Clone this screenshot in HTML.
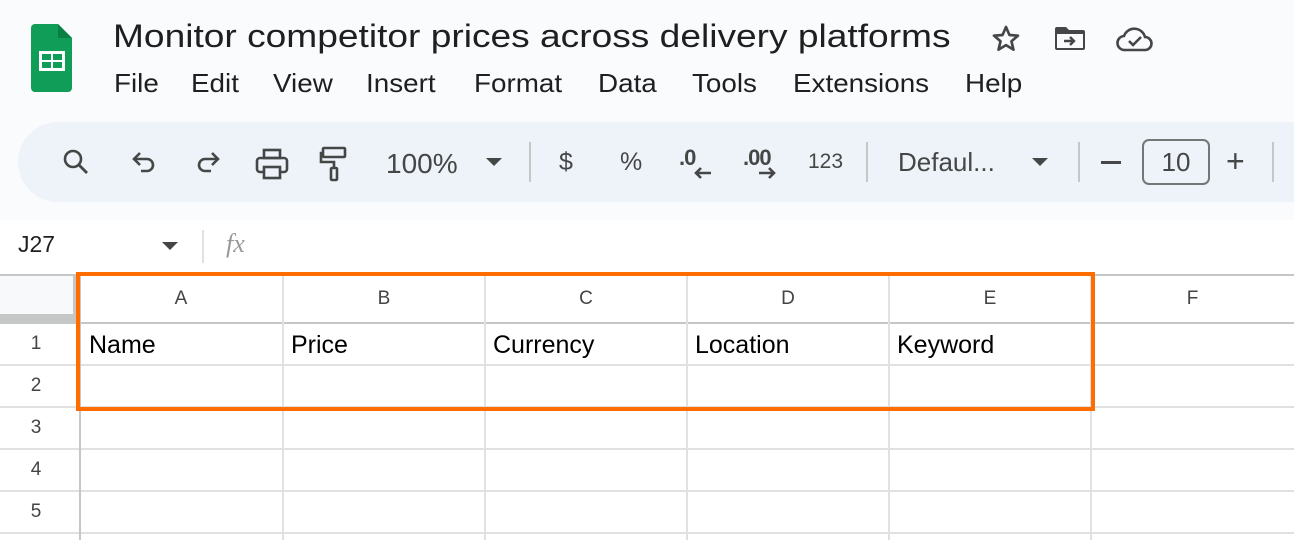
<!DOCTYPE html>
<html><head><meta charset="utf-8"><style>
*{margin:0;padding:0;box-sizing:border-box}
body{width:1294px;height:540px;overflow:hidden;background:#f9fbfd;font-family:"Liberation Sans",Arial,sans-serif;position:relative}
.a{position:absolute}
.title{left:113px;top:18px;font-size:32px;color:#1f1f1f;white-space:nowrap;transform:scaleX(1.16);transform-origin:left}
.menu{top:68px;font-size:26px;color:#1f1f1f;transform:scaleX(1.07);transform-origin:left}
.tb{left:18px;top:122px;width:1320px;height:80px;background:#eef2f9;border-radius:40px}
.ic{color:#444746;font-size:25px}
.sep{width:2px;height:40px;background:#c7c7c7;top:142px}
.fb{left:0;top:220px;width:1294px;height:54px;background:#fff}
.grid{left:0;top:274px;width:1294px;height:266px;background:#fff}
.hl{position:absolute;left:0;width:1294px;height:2px;background:#e1e1e1}
.vl{position:absolute;top:0;width:2px;height:266px;background:#e1e1e1}
.ch{position:absolute;top:14px;font-size:19px;color:#444;text-align:center}
.rh{position:absolute;left:0;width:72px;text-align:center;font-size:19px;color:#444}
.ct{position:absolute;top:57px;font-size:25px;color:#000}
</style></head><body>
<svg class="a" style="left:31px;top:24px" width="41" height="68" viewBox="0 0 41 68"><path d="M4 0H27L41 14V64a4 4 0 0 1-4 4H4a4 4 0 0 1-4-4V4a4 4 0 0 1 4-4z" fill="#0f9d58"/><path d="M27 0V14H41z" fill="#0b8043"/><rect x="8" y="27" width="26" height="20" fill="#fff"/><rect x="11" y="30" width="9" height="6" fill="#0f9d58"/><rect x="22" y="30" width="9" height="6" fill="#0f9d58"/><rect x="11" y="38" width="9" height="6" fill="#0f9d58"/><rect x="22" y="38" width="9" height="6" fill="#0f9d58"/></svg>
<div class="a title">Monitor competitor prices across delivery platforms</div>
<div class="a menu" style="left:114px">File</div>
<div class="a menu" style="left:191px">Edit</div>
<div class="a menu" style="left:273px">View</div>
<div class="a menu" style="left:366px">Insert</div>
<div class="a menu" style="left:474px">Format</div>
<div class="a menu" style="left:598px">Data</div>
<div class="a menu" style="left:692px">Tools</div>
<div class="a menu" style="left:793px">Extensions</div>
<div class="a menu" style="left:965px">Help</div>
<svg class="a" style="left:989px;top:23px" width="34" height="32" viewBox="0 0 24 24"><path d="M12 3l2.6 6 6.4.5-4.9 4.2 1.5 6.3L12 16.6 6.4 20l1.5-6.3L3 9.5 9.4 9z" fill="none" stroke="#444746" stroke-width="2" stroke-linejoin="round"/></svg>
<svg class="a" style="left:1054px;top:26px" width="32" height="26" viewBox="0 0 32 26"><path d="M1 3a2 2 0 0 1 2-2h9l3 3h14a2 2 0 0 1 2 2v16a2 2 0 0 1-2 2H3a2 2 0 0 1-2-2z" fill="#444746"/><rect x="3" y="8" width="26" height="14" fill="#f9fbfd"/><path d="M10 15h10M16 11l4 4-4 4" stroke="#444746" stroke-width="2.4" fill="none"/></svg>
<svg class="a" style="left:1116px;top:26px" width="38" height="26" viewBox="0 0 38 26"><path d="M9 24a7 7 0 0 1-1-14 11 11 0 0 1 21 1 6.5 6.5 0 0 1 0 13z" fill="none" stroke="#444746" stroke-width="2.6"/><path d="M13 15l4 4 8-8" stroke="#444746" stroke-width="2.6" fill="none"/></svg>
<div class="a tb"></div>
<svg class="a" style="left:62px;top:148px" width="28" height="28" viewBox="0 0 28 28"><circle cx="11" cy="11" r="8" fill="none" stroke="#444746" stroke-width="2.6"/><path d="M17 17l8 8" stroke="#444746" stroke-width="2.8"/></svg>
<svg class="a" style="left:132px;top:150px" width="26" height="28" viewBox="0 0 26 28"><path d="M3 9h12a6 6 0 0 1 0 12H9" fill="none" stroke="#444746" stroke-width="2.6"/><path d="M8 3L2 9l6 6" fill="none" stroke="#444746" stroke-width="2.6"/></svg>
<svg class="a" style="left:194px;top:150px" width="26" height="28" viewBox="0 0 26 28"><path d="M23 9H11a6 6 0 0 0 0 12h6" fill="none" stroke="#444746" stroke-width="2.6"/><path d="M18 3l6 6-6 6" fill="none" stroke="#444746" stroke-width="2.6"/></svg>
<svg class="a" style="left:255px;top:148px" width="34" height="32" viewBox="0 0 34 32"><rect x="9" y="2" width="16" height="8" fill="none" stroke="#444746" stroke-width="2.6"/><rect x="2" y="10" width="30" height="14" rx="3" fill="none" stroke="#444746" stroke-width="2.6"/><rect x="9" y="19" width="16" height="11" fill="#eef2f9" stroke="#444746" stroke-width="2.6"/></svg>
<svg class="a" style="left:319px;top:146px" width="30" height="36" viewBox="0 0 30 36"><rect x="4" y="2" width="22" height="9" rx="1" fill="none" stroke="#444746" stroke-width="2.6"/><path d="M4 7H2v9h13v6" fill="none" stroke="#444746" stroke-width="2.6"/><rect x="12" y="22" width="6" height="12" rx="1" fill="none" stroke="#444746" stroke-width="2.6"/></svg>
<div class="a ic" style="left:386px;top:148px;font-size:28px">100%</div>
<div class="a" style="left:486px;top:158px;width:0;height:0;border-left:8px solid transparent;border-right:8px solid transparent;border-top:8px solid #444746"></div>
<div class="a sep" style="left:529px"></div>
<div class="a ic" style="left:559px;top:148px">$</div>
<div class="a ic" style="left:620px;top:148px">%</div>
<div class="a ic" style="left:679px;top:145px;font-size:22px;font-weight:bold;letter-spacing:-1px">.0</div>
<svg class="a" style="left:693px;top:166px" width="20" height="14" viewBox="0 0 20 14"><path d="M18 7H3M8 2L3 7l5 5" stroke="#444746" stroke-width="2.6" fill="none"/></svg>
<div class="a ic" style="left:743px;top:145px;font-size:22px;font-weight:bold;letter-spacing:-1px">.00</div>
<svg class="a" style="left:757px;top:166px" width="20" height="14" viewBox="0 0 20 14"><path d="M2 7h15M12 2l5 5-5 5" stroke="#444746" stroke-width="2.6" fill="none"/></svg>
<div class="a ic" style="left:808px;top:150px;font-size:21px">123</div>
<div class="a sep" style="left:866px"></div>
<div class="a ic" style="left:898px;top:147px;font-size:26px">Defaul...</div>
<div class="a" style="left:1032px;top:158px;width:0;height:0;border-left:8px solid transparent;border-right:8px solid transparent;border-top:8px solid #444746"></div>
<div class="a sep" style="left:1078px"></div>
<div class="a" style="left:1101px;top:161px;width:20px;height:2.6px;background:#444746"></div>
<div class="a" style="left:1142px;top:139px;width:68px;height:46px;border:2px solid #747775;border-radius:7px;text-align:center;font-size:26px;line-height:42px;color:#444746">10</div>
<div class="a ic" style="left:1226px;top:143px;font-size:32px">+</div>
<div class="a sep" style="left:1272px"></div>
<div class="a fb"></div>
<div class="a" style="left:18px;top:231px;font-size:23px;color:#1f1f1f">J27</div>
<div class="a" style="left:162px;top:242px;width:0;height:0;border-left:8px solid transparent;border-right:8px solid transparent;border-top:8px solid #444746"></div>
<div class="a" style="left:202px;top:230px;width:2px;height:33px;background:#e1e1e1"></div>
<div class="a" style="left:226px;top:229px;font-size:26px;font-style:italic;color:#999;font-family:'Liberation Serif',serif">fx</div>
<div class="a grid">
 <div class="a" style="left:0;top:0;width:1294px;height:2px;background:#c4c7c5"></div>
 <div class="a" style="left:0;top:2px;width:74px;height:38px;background:#f8f9fa"></div>
 <div class="a" style="left:0;top:40px;width:80px;height:8px;background:#c4c7c5"></div>
 <div class="a" style="left:73px;top:0;width:7px;height:48px;background:#c4c7c5"></div>
 <div class="hl" style="top:48px;background:#c4c7c5"></div>
 <div class="hl" style="top:90px"></div><div class="hl" style="top:132px"></div><div class="hl" style="top:174px"></div><div class="hl" style="top:216px"></div><div class="hl" style="top:258px"></div>
 <div class="vl" style="left:79px;background:#c4c7c5"></div>
 <div class="vl" style="left:282px"></div><div class="vl" style="left:484px"></div><div class="vl" style="left:686px"></div><div class="vl" style="left:888px"></div><div class="vl" style="left:1090px"></div>
 <div class="ch" style="left:80px;width:202px">A</div>
 <div class="ch" style="left:283px;width:202px">B</div>
 <div class="ch" style="left:485px;width:202px">C</div>
 <div class="ch" style="left:687px;width:202px">D</div>
 <div class="ch" style="left:889px;width:202px">E</div>
 <div class="ch" style="left:1091px;width:203px">F</div>
 <div class="rh" style="top:59px">1</div><div class="rh" style="top:101px">2</div><div class="rh" style="top:143px">3</div><div class="rh" style="top:185px">4</div><div class="rh" style="top:227px">5</div>
 <div class="ct" style="left:89px">Name</div>
 <div class="ct" style="left:291px">Price</div>
 <div class="ct" style="left:493px">Currency</div>
 <div class="ct" style="left:695px">Location</div>
 <div class="ct" style="left:897px">Keyword</div>
</div>
<div class="a" style="left:76px;top:272px;width:1019px;height:139px;border:4px solid #ff6d00"></div>
</body></html>
